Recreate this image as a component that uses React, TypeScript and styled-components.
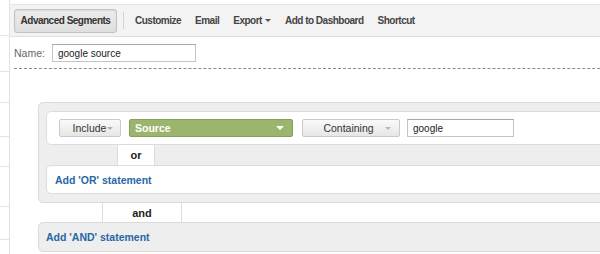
import React from "react";
import styled, { createGlobalStyle } from "styled-components";

const GlobalStyle = createGlobalStyle`
	html, body {
		margin: 0;
		padding: 0;
		background: #fff;
		overflow: hidden;
		font-family: "Liberation Sans", Arial, sans-serif;
	}
`;

const Page = styled.div`
	display: flex;
	width: 600px;
	height: 254px;
	overflow: hidden;
`;

const SideStrip = styled.div`
	width: 9px;
	flex-shrink: 0;
	border-right: 1px solid #e2e2e2;
`;

const StripCell = styled.div<{ h: number }>`
	height: ${props => props.h - 1}px;
	border-bottom: 1px solid #e4e4e4;
`;

const Main = styled.div`
	flex: 1;
	min-width: 0;
	overflow: hidden;
`;

const Content = styled.div`
	width: 640px;
`;

const Toolbar = styled.div`
	margin-top: 4px;
	height: 31px;
	display: flex;
	align-items: center;
	padding-left: 4px;
	background: #f3f3f3;
	border-top: 1px solid #e6e6e6;
	border-bottom: 1px solid #e0e0e0;
`;

const SegmentsButton = styled.div`
	box-sizing: border-box;
	flex-shrink: 0;
	width: 103px;
	height: 24px;
	display: flex;
	align-items: center;
	justify-content: center;
	white-space: nowrap;
	border: 1px solid #c2c2c2;
	border-radius: 3px;
	background: linear-gradient(#ececec, #e0e0e0);
	box-shadow: inset 0 1px 2px rgba(0, 0, 0, 0.08);
	font-size: 10px;
	letter-spacing: -0.5px;
	font-weight: bold;
	color: #333;
`;

const Separator = styled.div`
	flex-shrink: 0;
	width: 1px;
	height: 17px;
	background: #d2d2d2;
	margin: 0 11px 0 6px;
`;

const ToolItems = styled.div`
	display: flex;
	align-items: center;
	gap: 14px;
`;

const ToolItem = styled.span`
	display: flex;
	align-items: center;
	gap: 3px;
	white-space: nowrap;
	font-size: 10px;
	letter-spacing: -0.5px;
	font-weight: bold;
	color: #444;
`;

const Caret = styled.span<{ color: string; size?: number }>`
	display: inline-block;
	width: 0;
	height: 0;
	border-left: ${props => props.size ?? 3}px solid transparent;
	border-right: ${props => props.size ?? 3}px solid transparent;
	border-top: ${props => props.size ?? 3}px solid ${props => props.color};
`;

const NameRow = styled.div`
	display: flex;
	align-items: center;
	gap: 7px;
	padding-left: 4px;
	margin-top: 7px;
`;

const NameLabel = styled.span`
	font-size: 10.5px;
	color: #666;
`;

const TextBox = styled.div<{ w: number }>`
	box-sizing: border-box;
	width: ${props => props.w}px;
	height: 18px;
	display: flex;
	align-items: center;
	padding-left: 5px;
	border: 1px solid #c4c4c4;
	border-top-color: #a8a8a8;
	background: #fff;
	font-size: 10px;
	color: #222;
`;

const DashedRule = styled.div`
	margin: 6px 0 0 4px;
	border-top: 1px dashed #8a8a8a;
`;

const OrGroup = styled.div`
	margin: 33px 0 0 28px;
	padding: 8px 0 8px 7px;
	background: #eeeeee;
	border: 1px solid #dadada;
	border-radius: 5px;
`;

const WhitePanel = styled.div<{ h: number }>`
	box-sizing: border-box;
	height: ${props => props.h}px;
	display: flex;
	align-items: center;
	background: #fff;
	border: 1px solid #dcdcdc;
	border-radius: 5px;
`;

const ConditionRow = styled(WhitePanel)`
	padding-left: 12px;
`;

const SelectButton = styled.div<{ w: number; mr: number; gap: number; pl: number }>`
	box-sizing: border-box;
	width: ${props => props.w}px;
	height: 18px;
	margin-right: ${props => props.mr}px;
	padding-left: ${props => props.pl}px;
	display: flex;
	align-items: center;
	justify-content: center;
	gap: ${props => props.gap}px;
	border: 1px solid #cacaca;
	border-radius: 2px;
	background: linear-gradient(#fafafa, #e6e6e6);
	font-size: 10.5px;
	color: #333;
`;

const SourceSelect = styled.div`
	box-sizing: border-box;
	width: 164px;
	height: 18px;
	margin-right: 9px;
	display: flex;
	align-items: center;
	justify-content: space-between;
	padding: 0 8px 0 5px;
	background: #9bb56f;
	border: 1px solid #86a05b;
	border-radius: 2px;
	font-size: 10.5px;
	font-weight: bold;
	color: #fff;
`;

const Connector = styled.div<{ offset: number; w: number; h: number }>`
	box-sizing: border-box;
	height: ${props => props.h}px;
	width: ${props => props.w}px;
	margin-left: ${props => props.offset}px;
	display: flex;
	align-items: center;
	justify-content: center;
	background: #fff;
	border-left: 1px solid #dcdcdc;
	border-right: 1px solid #dcdcdc;
	font-size: 11px;
	font-weight: bold;
	color: #222;
`;

const AddLink = styled.span`
	font-size: 10.5px;
	font-weight: bold;
	color: #2767a6;
`;

const AddOrPanel = styled(WhitePanel)`
	padding-left: 8px;
`;

const AddAndPanel = styled.div`
	box-sizing: border-box;
	height: 30px;
	margin-left: 28px;
	display: flex;
	align-items: center;
	padding-left: 7px;
	background: #eeeeee;
	border: 1px solid #dadada;
	border-radius: 5px;
`;

const stripHeights = [36, 36, 31, 34, 30, 40, 33, 20];
const toolItems = ["Customize", "Email", "Export", "Add to Dashboard", "Shortcut"];

export default function App() {
	return (
		<>
			<GlobalStyle />
			<Page>
				<SideStrip>
					{stripHeights.map((h, i) => (
						<StripCell key={i} h={h} />
					))}
				</SideStrip>
				<Main>
					<Content>
						<Toolbar>
							<SegmentsButton>Advanced Segments</SegmentsButton>
							<Separator />
							<ToolItems>
								{toolItems.map(item => (
									<ToolItem key={item}>
										{item}
										{item === "Export" && <Caret color="#555" />}
									</ToolItem>
								))}
							</ToolItems>
						</Toolbar>

						<NameRow>
							<NameLabel>Name:</NameLabel>
							<TextBox w={144}>google source</TextBox>
						</NameRow>
						<DashedRule />

						<OrGroup>
							<ConditionRow h={34}>
								<SelectButton w={62} mr={8} gap={1} pl={6}>
									Include
									<Caret color="#b0b0b0" />
								</SelectButton>
								<SourceSelect>
									Source
									<Caret color="#fff" size={4} />
								</SourceSelect>
								<SelectButton w={98} mr={7} gap={11} pl={12}>
									Containing
									<Caret color="#b8b8b8" />
								</SelectButton>
								<TextBox w={107}>google</TextBox>
							</ConditionRow>
							<Connector offset={71} w={38} h={20}>or</Connector>
							<AddOrPanel h={29}>
								<AddLink>Add 'OR' statement</AddLink>
							</AddOrPanel>
						</OrGroup>

						<Connector offset={92} w={80} h={19}>and</Connector>
						<AddAndPanel>
							<AddLink>Add 'AND' statement</AddLink>
						</AddAndPanel>
					</Content>
				</Main>
			</Page>
		</>
	);
}
